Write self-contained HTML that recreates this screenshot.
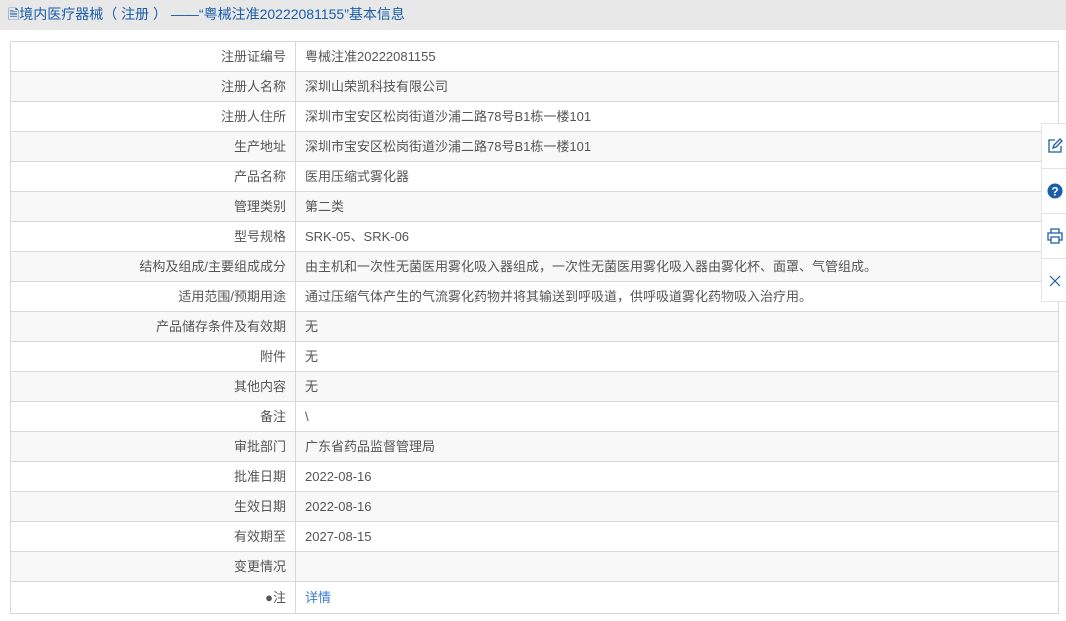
<!DOCTYPE html>
<html><head><meta charset="utf-8"><style>
body{margin:0;width:1066px;height:621px;background:#fff;font-family:"Liberation Sans","Noto Sans CJK SC",sans-serif;font-size:13px;color:#555;overflow:hidden;position:relative}
.hd{height:30px;background:#e8e8e8;color:#1a5da8;font-size:14px;line-height:28px;padding-left:8px}
table{position:absolute;left:10px;top:41px;width:1049px;border-collapse:collapse}
td{height:29px;border:1px solid #d8d8d8;padding:0 9px;line-height:29px}
tr:last-child td{height:31px}
td.l{width:266px;text-align:right}
tr:nth-child(even) td{background:#f8f8f8}
a{color:#3a7bd5;text-decoration:none}
.side{position:absolute;left:1041px;top:123px;width:26px;height:177px;background:#fff;border:1px solid #e4e4e4;border-right:none}
.side div{height:44px;border-bottom:1px solid #e4e4e4;display:flex;align-items:center;justify-content:center;color:#1a5da8}
</style></head><body>
<div class="hd">🗎境内医疗器械（ 注册 ） ——“粤械注准20222081155”基本信息</div>
<table>
<tr><td class="l">注册证编号</td><td>粤械注准20222081155</td></tr>
<tr><td class="l">注册人名称</td><td>深圳山荣凯科技有限公司</td></tr>
<tr><td class="l">注册人住所</td><td>深圳市宝安区松岗街道沙浦二路78号B1栋一楼101</td></tr>
<tr><td class="l">生产地址</td><td>深圳市宝安区松岗街道沙浦二路78号B1栋一楼101</td></tr>
<tr><td class="l">产品名称</td><td>医用压缩式雾化器</td></tr>
<tr><td class="l">管理类别</td><td>第二类</td></tr>
<tr><td class="l">型号规格</td><td>SRK-05、SRK-06</td></tr>
<tr><td class="l">结构及组成/主要组成成分</td><td>由主机和一次性无菌医用雾化吸入器组成，一次性无菌医用雾化吸入器由雾化杯、面罩、气管组成。</td></tr>
<tr><td class="l">适用范围/预期用途</td><td>通过压缩气体产生的气流雾化药物并将其输送到呼吸道，供呼吸道雾化药物吸入治疗用。</td></tr>
<tr><td class="l">产品储存条件及有效期</td><td>无</td></tr>
<tr><td class="l">附件</td><td>无</td></tr>
<tr><td class="l">其他内容</td><td>无</td></tr>
<tr><td class="l">备注</td><td>\</td></tr>
<tr><td class="l">审批部门</td><td>广东省药品监督管理局</td></tr>
<tr><td class="l">批准日期</td><td>2022-08-16</td></tr>
<tr><td class="l">生效日期</td><td>2022-08-16</td></tr>
<tr><td class="l">有效期至</td><td>2027-08-15</td></tr>
<tr><td class="l">变更情况</td><td></td></tr>
<tr><td class="l"><span style="color:#555">●</span>注</td><td><a>详情</a></td></tr>
</table>
<div class="side">
<div><svg width="16" height="16" viewBox="0 0 16 16" fill="none" stroke="#1a5da8" stroke-width="1.3"><path d="M8 2H2v12h12V8"/><path d="M6 10l1-3 6-6 2 2-6 6z"/></svg></div>
<div><svg width="16" height="16" viewBox="0 0 16 16"><circle cx="8" cy="8" r="7.5" fill="#1a5da8"/><text x="8" y="12.5" font-size="12" font-weight="bold" fill="#fff" text-anchor="middle" font-family="Liberation Sans">?</text></svg></div>
<div><svg width="16" height="16" viewBox="0 0 16 16" fill="none" stroke="#1a5da8" stroke-width="1.3"><path d="M4 5V1h8v4M4 12H1V5h14v7h-3M4 9h8v6H4z"/></svg></div>
<div style="border:none"><svg width="14" height="14" viewBox="0 0 14 14" stroke="#1a5da8" stroke-width="1.2"><path d="M2 2l10 10M12 2L2 12"/></svg></div>
</div>
</body></html>
